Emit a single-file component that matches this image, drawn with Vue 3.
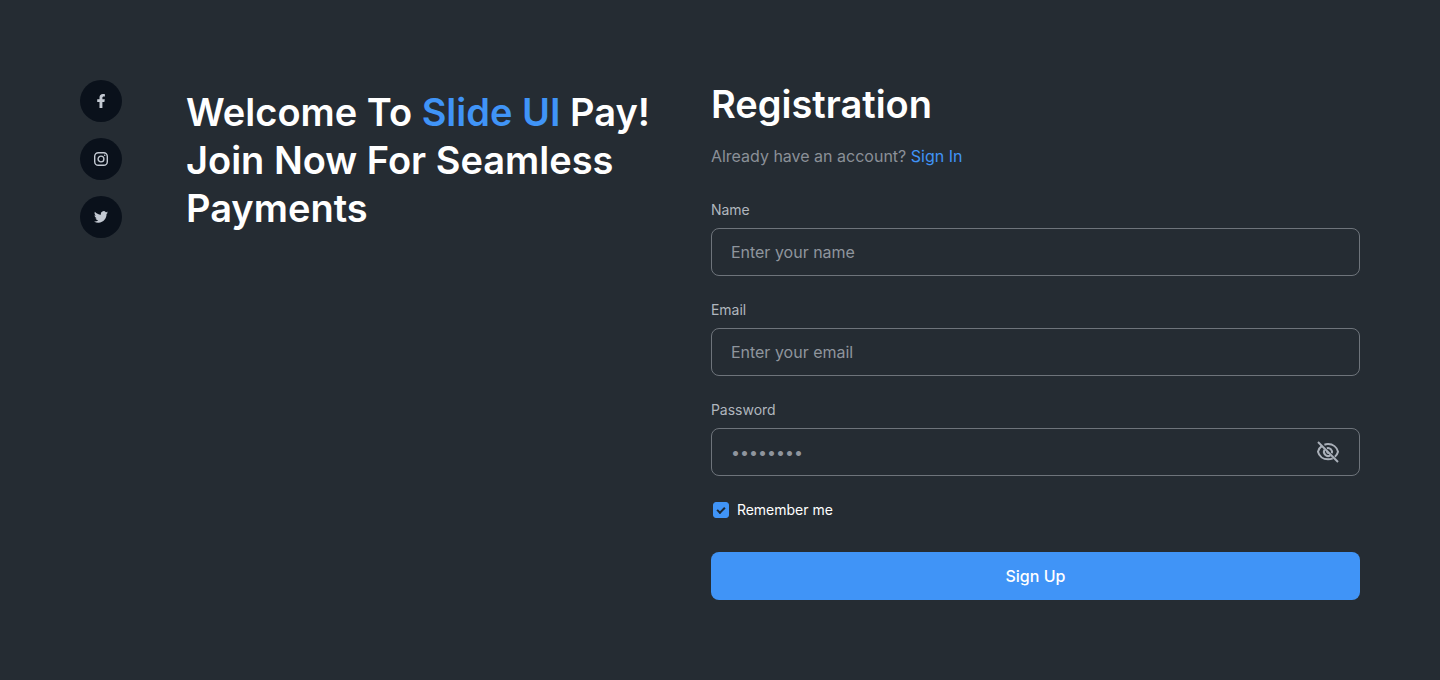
<script setup>
import { ref } from 'vue'

const name = ref('')
const email = ref('')
const password = ref('')
const remember = ref(true)
const showPassword = ref(false)
</script>

<template>
  <main class="page">
    <nav class="socials" aria-label="Social links">
      <a class="social" href="#facebook" aria-label="Facebook">
        <svg width="16" height="16" viewBox="0 0 16 16" fill="currentColor" aria-hidden="true">
          <path d="M6.500 15V8.900H4.200V6.300h2.300V4.600C6.500 2.300 7.800 1 9.900 1c1 0 2 .2 2 .2v2.200h-1.100c-1.100 0-1.400.7-1.400 1.300v1.600h2.400l-.4 2.600h-2V15z" />
        </svg>
      </a>
      <a class="social" href="#instagram" aria-label="Instagram">
        <svg width="16" height="16" viewBox="0 0 16 16" fill="none" stroke="currentColor" stroke-width="1.4" aria-hidden="true">
          <rect x="1.700" y="1.700" width="12.600" height="12.600" rx="3.600" />
          <circle cx="8" cy="8" r="2.900" />
          <circle cx="11.700" cy="4.300" r="0.800" fill="currentColor" stroke="none" />
        </svg>
      </a>
      <a class="social" href="#twitter" aria-label="Twitter">
        <svg width="16" height="16" viewBox="0 0 24 24" fill="currentColor" aria-hidden="true">
          <path d="M22.500 5.300c-.8.4-1.600.6-2.500.7.9-.5 1.600-1.400 1.900-2.400-.8.5-1.800.9-2.700 1.100a4.300 4.300 0 0 0-7.400 3.900C8.200 8.400 5 6.700 2.900 4.100c-1.200 2-.5 4.500 1.400 5.800-.7 0-1.400-.2-2-.5 0 2.100 1.500 3.900 3.500 4.300-.6.2-1.300.2-2 .1.6 1.700 2.200 3 4.100 3a8.700 8.700 0 0 1-6.400 1.800 12.200 12.200 0 0 0 6.600 1.900c8 0 12.500-6.700 12.200-12.900.9-.6 1.600-1.400 2.200-2.300z" />
        </svg>
      </a>
    </nav>

    <h1 class="headline">
      Welcome To <span class="brand">Slide UI</span> Pay! Join Now For Seamless Payments
    </h1>

    <section class="registration">
      <h2 class="title">Registration</h2>
      <p class="subtitle">Already have an account? <a href="#sign-in">Sign In</a></p>

      <form class="form" @submit.prevent>
        <div class="field">
          <label for="name">Name</label>
          <input id="name" v-model="name" class="control" type="text" placeholder="Enter your name" />
        </div>
        <div class="field">
          <label for="email">Email</label>
          <input id="email" v-model="email" class="control" type="email" placeholder="Enter your email" />
        </div>
        <div class="field">
          <label for="password">Password</label>
          <div class="control password">
            <input id="password" v-model="password" :type="showPassword ? 'text' : 'password'" placeholder="••••••••" />
            <button type="button" class="toggle" aria-label="Show password" @click="showPassword = !showPassword">
              <svg width="24" height="24" viewBox="0 0 24 24" fill="none" stroke="currentColor" stroke-width="2" aria-hidden="true">
                <path d="M8.400 4.700C9.500 4.300 10.700 4.100 12 4.100c5 0 8.900 3.100 10 7.600-.5 2-1.600 3.700-3.100 5M16.700 18.300c-1.400.7-3 1-4.700 1-5 0-8.900-3.100-10-7.600.6-2.400 2-4.400 4-5.800" />
                <path d="M10.900 8.200a4.100 4.100 0 0 1 5 5M14.300 15.400A4.200 4.200 0 0 1 8.500 9.700" />
                <path d="M11.400 11.200a1.200 1.200 0 0 0 1.500 1.700" />
                <path d="M2 2l20 20" />
              </svg>
            </button>
          </div>
        </div>
        <label class="remember">
          <input v-model="remember" type="checkbox" />
          <span>Remember me</span>
        </label>
        <button type="submit" class="submit">Sign Up</button>
      </form>
    </section>
  </main>
</template>

<style>
body {
  margin: 0;
  background: #252c33;
}
</style>

<style scoped>
.page {
  box-sizing: border-box;
  min-height: 100vh;
  padding: 80px;
  display: grid;
  grid-template-columns: 58px 36fr 49fr;
  column-gap: 48px;
  align-items: start;
  background: #252c33;
  color: #fff;
  font-family: Inter, "Liberation Sans", sans-serif;
  font-size: 16px;
  line-height: 24px;
}

.socials {
  display: grid;
  gap: 16px;
  padding-right: 16px;
}

.social {
  display: flex;
  align-items: center;
  justify-content: center;
  height: 42px;
  border-radius: 50%;
  background: #0a111b;
  color: #c3c9d2;
}

.headline,
.title {
  margin: 0;
  font-size: 38px;
  font-weight: 600;
  line-height: 48px;
}

.headline {
  padding-top: 8px;
}

.brand,
.subtitle a {
  color: #4094f7;
}

.subtitle {
  margin: 16px 0 0;
  color: #8b9098;
}

.subtitle a {
  text-decoration: none;
}

.form {
  display: grid;
  gap: 24px;
  margin-top: 32px;
}

.field {
  display: grid;
  gap: 8px;
}

.field label {
  color: #b0b6be;
  font-size: 14px;
  line-height: 20px;
}

.control {
  box-sizing: border-box;
  width: 100%;
  height: 48px;
  padding: 0 19px;
  border: 1px solid #6e747b;
  border-radius: 8px;
  background: transparent;
  color: #fff;
  font: inherit;
}

.control::placeholder,
.password input::placeholder {
  color: #8f959d;
  opacity: 1;
}

.password {
  display: flex;
  align-items: center;
  gap: 16px;
}

.password input {
  flex: 1;
  min-width: 0;
  padding: 0;
  border: 0;
  background: transparent;
  color: #fff;
  font: inherit;
}

.toggle {
  display: flex;
  padding: 0;
  border: 0;
  background: transparent;
  color: #aab0b9;
  cursor: pointer;
}

.remember {
  display: flex;
  align-items: center;
  gap: 8px;
  padding-left: 2px;
  font-size: 14px;
  line-height: 20px;
}

.remember input {
  appearance: none;
  display: grid;
  place-items: center;
  box-sizing: border-box;
  width: 16px;
  height: 16px;
  margin: 0;
  border: 1px solid #4094f7;
  border-radius: 3px;
}

.remember input:checked {
  background: #4094f7;
}

.remember input:checked::after {
  content: "";
  box-sizing: border-box;
  width: 8px;
  height: 5px;
  border: solid #1b2733;
  border-width: 0 0 2px 2px;
  transform: translateY(-1px) rotate(-45deg);
}

.submit {
  height: 48px;
  margin-top: 8px;
  border: 0;
  border-radius: 8px;
  background: #4094f7;
  color: #fff;
  font: inherit;
  font-weight: 500;
  cursor: pointer;
}
</style>
